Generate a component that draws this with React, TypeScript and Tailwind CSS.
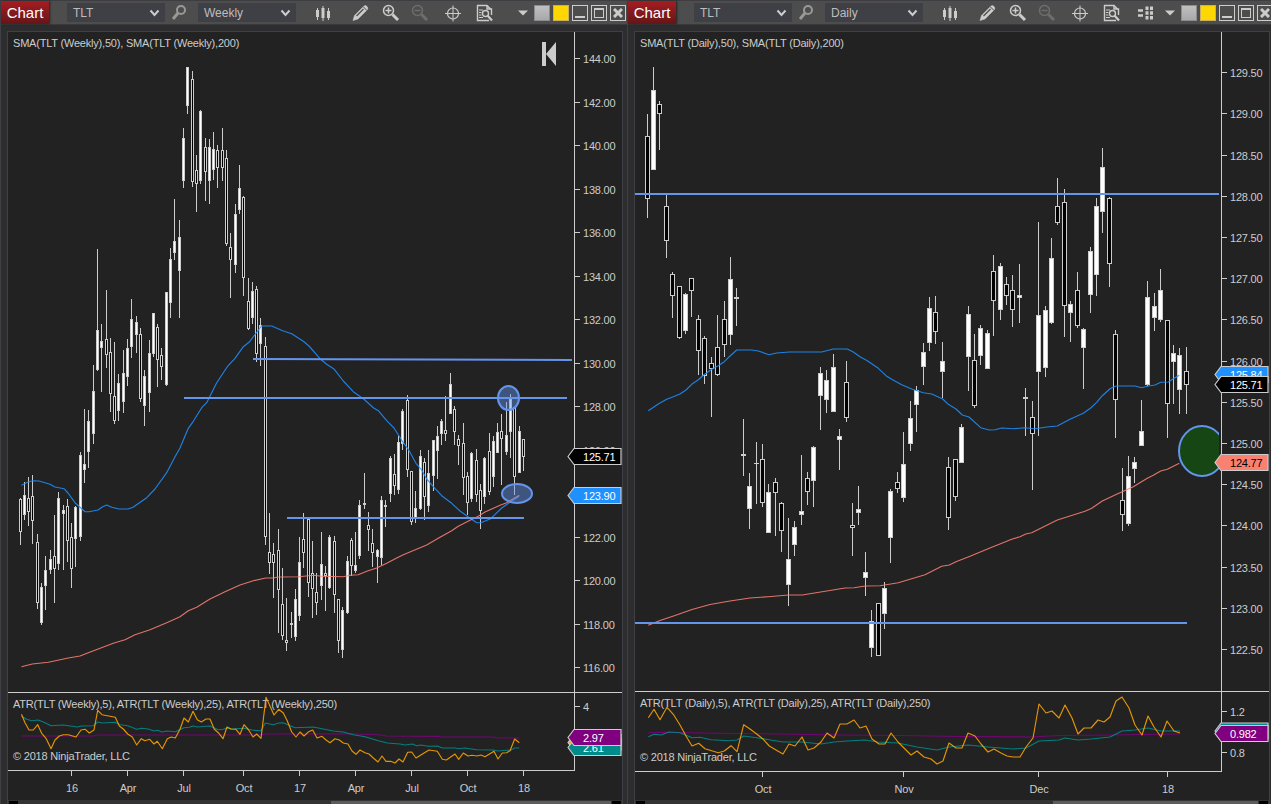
import type { ReactNode } from 'react';
import clsx from 'clsx';

// [x, high, low, bodyTop, bodyBottom, up]
type Candle = [number, number, number, number, number, 0 | 1];

const weekly: Candle[] = [
  [20, 498, 545, 499, 532, 0], [24, 482, 520, 495, 515, 1], [28, 477, 526, 498, 512, 0], [32, 475, 544, 496, 521, 0],
  [37, 534, 609, 542, 603, 0], [41, 583, 625, 587, 623, 1], [45, 556, 610, 570, 586, 1], [50, 550, 574, 559, 570, 1],
  [54, 515, 603, 556, 569, 0], [58, 492, 570, 498, 564, 1], [63, 505, 570, 510, 514, 1], [67, 499, 562, 506, 541, 0],
  [71, 523, 588, 537, 569, 0], [75, 506, 567, 507, 539, 1], [80, 452, 541, 455, 537, 1], [84, 409, 483, 464, 470, 1],
  [88, 410, 468, 421, 452, 1], [93, 365, 444, 391, 434, 1], [97, 249, 371, 330, 370, 1], [101, 324, 392, 341, 348, 1],
  [106, 290, 368, 339, 355, 0], [110, 338, 412, 352, 394, 0], [114, 342, 424, 396, 421, 0], [118, 374, 421, 383, 411, 1],
  [123, 350, 413, 373, 402, 1], [127, 339, 386, 348, 377, 1], [131, 299, 358, 319, 347, 1], [136, 316, 353, 322, 335, 1],
  [140, 328, 402, 334, 399, 0], [144, 370, 426, 376, 406, 1], [149, 340, 412, 353, 393, 1], [153, 313, 357, 313, 354, 1],
  [157, 324, 387, 327, 360, 0], [161, 348, 380, 355, 367, 0], [166, 292, 386, 292, 385, 1], [170, 248, 318, 259, 303, 1],
  [174, 199, 260, 241, 253, 1], [179, 220, 318, 237, 271, 1], [183, 128, 188, 138, 181, 1], [187, 67, 114, 67, 106, 1],
  [192, 71, 187, 79, 182, 0], [196, 155, 212, 170, 184, 0], [200, 110, 184, 111, 181, 1], [205, 138, 201, 147, 172, 0],
  [209, 139, 204, 147, 181, 1], [213, 132, 180, 149, 170, 1], [217, 145, 188, 150, 168, 0], [222, 128, 181, 150, 168, 0],
  [226, 150, 246, 158, 244, 0], [230, 233, 298, 247, 260, 0], [235, 204, 273, 214, 265, 1], [239, 165, 214, 188, 210, 1],
  [243, 196, 296, 197, 278, 0], [248, 278, 330, 301, 329, 0], [252, 282, 324, 291, 318, 1], [256, 286, 362, 289, 354, 0],
  [260, 318, 366, 325, 344, 1], [265, 337, 545, 346, 537, 0], [269, 513, 574, 552, 563, 0], [273, 543, 598, 554, 563, 0],
  [278, 529, 633, 550, 590, 0], [282, 568, 640, 604, 636, 0], [286, 598, 651, 640, 643, 0], [291, 612, 638, 623, 625, 1],
  [295, 589, 641, 599, 637, 1], [299, 537, 621, 562, 616, 1], [303, 513, 568, 539, 553, 0], [308, 518, 597, 519, 583, 0],
  [312, 541, 618, 573, 589, 0], [316, 573, 615, 592, 603, 0], [321, 532, 600, 564, 586, 1], [325, 566, 611, 573, 576, 0],
  [329, 535, 589, 537, 588, 1], [334, 536, 613, 541, 595, 0], [338, 599, 653, 599, 641, 0], [342, 607, 658, 610, 650, 1],
  [347, 556, 614, 561, 613, 1], [351, 538, 576, 540, 566, 0], [355, 532, 573, 565, 571, 1], [359, 500, 559, 505, 556, 1],
  [364, 473, 509, 503, 505, 1], [368, 512, 551, 525, 530, 0], [372, 529, 567, 543, 553, 0], [377, 549, 583, 550, 557, 1],
  [381, 496, 565, 500, 558, 1], [385, 500, 527, 505, 507, 1], [390, 456, 502, 458, 494, 1], [394, 454, 495, 474, 486, 0],
  [398, 436, 494, 442, 490, 1], [402, 409, 450, 411, 444, 1], [407, 395, 477, 400, 470, 0], [411, 471, 525, 471, 522, 0],
  [415, 491, 523, 508, 518, 1], [420, 450, 510, 456, 509, 1], [424, 458, 520, 462, 497, 0], [428, 450, 512, 473, 506, 1],
  [433, 440, 491, 440, 476, 1], [437, 426, 479, 436, 451, 1], [441, 419, 445, 421, 434, 1], [445, 396, 441, 430, 434, 0],
  [450, 373, 414, 384, 414, 1], [454, 406, 445, 409, 432, 0], [458, 435, 465, 439, 446, 0], [463, 423, 495, 443, 478, 0],
  [467, 472, 515, 476, 503, 0], [471, 452, 502, 453, 499, 1], [476, 449, 502, 460, 495, 0], [480, 484, 529, 490, 511, 0],
  [484, 457, 504, 458, 497, 1], [489, 433, 495, 451, 492, 0], [493, 436, 487, 441, 477, 1], [497, 423, 453, 432, 453, 1],
  [501, 414, 485, 431, 439, 0], [506, 402, 455, 435, 452, 1], [510, 394, 458, 399, 432, 1], [514, 407, 495, 407, 477, 0],
  [519, 426, 473, 431, 473, 1], [523, 439, 471, 439, 457, 0],
];

const daily: Candle[] = [
  [647, 114, 218, 136, 199, 0], [653, 67, 170, 90, 170, 1], [659, 101, 150, 104, 114, 0], [666, 195, 258, 206, 241, 0],
  [672, 272, 318, 274, 296, 0], [679, 286, 339, 286, 338, 0], [685, 293, 334, 294, 331, 1], [691, 278, 317, 278, 291, 0],
  [698, 315, 375, 319, 351, 0], [704, 336, 384, 338, 376, 0], [711, 357, 417, 363, 369, 0], [717, 315, 376, 347, 375, 0],
  [724, 301, 357, 319, 345, 0], [730, 257, 345, 279, 335, 1], [736, 288, 326, 297, 299, 0], [743, 419, 476, 454, 456, 1],
  [749, 473, 529, 486, 509, 1], [756, 442, 504, 463, 464, 0], [762, 444, 507, 459, 503, 0], [768, 484, 533, 492, 533, 1],
  [775, 478, 536, 482, 493, 0], [781, 502, 552, 503, 531, 0], [788, 518, 606, 559, 585, 1], [794, 521, 556, 527, 545, 1],
  [801, 455, 525, 511, 515, 1], [807, 472, 505, 478, 492, 0], [813, 446, 507, 447, 481, 1], [820, 367, 430, 373, 396, 1],
  [826, 370, 413, 380, 400, 1], [833, 354, 412, 367, 412, 1], [839, 429, 470, 436, 440, 1], [846, 361, 422, 382, 418, 0],
  [852, 503, 556, 525, 528, 0], [858, 486, 525, 509, 513, 1], [865, 552, 596, 572, 578, 1], [871, 610, 657, 621, 648, 1],
  [878, 603, 656, 603, 656, 0], [884, 582, 629, 588, 614, 1], [890, 489, 563, 491, 538, 1], [897, 472, 493, 482, 489, 0],
  [903, 432, 502, 464, 498, 1], [910, 401, 451, 418, 444, 1], [916, 386, 432, 390, 405, 1], [923, 343, 385, 352, 367, 1],
  [929, 297, 351, 308, 343, 1], [935, 296, 344, 312, 332, 0], [942, 342, 398, 361, 372, 1], [948, 457, 530, 467, 518, 0],
  [955, 459, 501, 459, 497, 0], [961, 424, 463, 427, 463, 1], [968, 306, 391, 314, 357, 1], [974, 334, 408, 360, 406, 0],
  [980, 325, 365, 328, 356, 1], [987, 330, 369, 333, 369, 1], [993, 255, 336, 271, 301, 0], [1000, 263, 320, 266, 310, 1],
  [1006, 277, 305, 284, 296, 0], [1012, 275, 327, 290, 310, 0], [1019, 264, 323, 295, 298, 1], [1025, 388, 436, 397, 399, 0],
  [1032, 401, 490, 417, 434, 0], [1038, 222, 436, 315, 372, 1], [1045, 306, 377, 310, 368, 1], [1051, 238, 324, 258, 323, 1],
  [1057, 178, 225, 206, 223, 0], [1064, 189, 337, 202, 306, 0], [1070, 301, 342, 304, 313, 1], [1077, 272, 328, 290, 326, 0],
  [1083, 328, 389, 329, 348, 1], [1090, 247, 313, 251, 295, 1], [1096, 198, 296, 206, 275, 1], [1102, 148, 233, 167, 212, 1],
  [1109, 197, 287, 198, 264, 0], [1115, 330, 438, 334, 400, 0], [1122, 468, 531, 500, 515, 0], [1128, 456, 526, 476, 524, 1],
  [1134, 457, 483, 462, 469, 1], [1141, 400, 446, 431, 446, 1], [1147, 281, 386, 297, 385, 1], [1154, 293, 331, 306, 318, 1],
  [1160, 269, 322, 290, 320, 1], [1167, 320, 438, 320, 404, 0], [1173, 345, 404, 353, 362, 1], [1179, 348, 414, 355, 390, 1],
  [1186, 347, 414, 371, 385, 0],
];

const weeklySma50 =
  '21.5,485.3 28.3,482 33,480.7 39,481 50,484.3 55,487 64,488.7 68,493 75,502.7 85,511.7 89,511.7 98,510 102.7,506.7 106.7,505 111.7,507.3 119,509 128,509 133,507.3 146.7,497.7 155,489 166.7,472.7 175,456.7 180,448 188.3,428.3 193.3,421.3 201.7,407.7 206.7,402.7 216.7,382.7 227.3,366.7 235,358.3 243.3,346.7 249.3,342 256.7,332.3 261.5,326 271.7,326 283.3,331 291.7,333.7 303.3,341.3 309,346 320,358.7 326.7,364.3 334.3,369.3 343.3,381 353.3,391.7 364,399.3 373.3,407.7 378.3,410.7 386.7,420.7 394,428 403.3,442.7 408.3,449.3 416,463.3 421.7,470 426.7,479 434,487.3 441.7,495.7 451.7,503.3 460,511 467.3,516.3 476.7,522.7 480.7,522.7 490.7,518.7 501.7,508 510.7,501.7 519.3,496.3';
const weeklySma200 =
  '21.5,666.7 32.3,664 48.3,662.3 68.3,658 80,656 88.3,652.7 113.3,643.3 125,639.7 135,634.7 150,629.7 166.7,622.7 180,616.7 188.3,610.7 196.7,607.3 210,599 225,591.7 240,585 253.3,580.7 265.7,578 273.3,578 278.3,577 299,576.7 313.3,575.3 321.7,576.3 343.3,576.7 350,575.3 358.3,574.7 366.7,571.3 376.7,568 386.7,563.3 396.7,558 403.3,554.7 426.7,545 440,537.3 451.7,530.7 458.3,526.3 470,520.3 478.3,516.3 485,512 500,505.3 506.7,502.7 519.3,495.3';
const dailySma50 =
  '648.3,410.7 658.3,404 666.7,399.3 673.3,396.7 680,394 686,390 691.7,384.3 698.3,379.7 704,374.7 711.7,369.3 718.3,365.7 724.3,361.7 730,356 736.7,350 751.7,350 758.3,351 769,354.7 776.7,353 789.3,352 821.7,352 833.3,349 847.3,349 853.3,352 860,356.7 867.3,360.7 878.3,368.3 886,375.7 891.7,379.3 901.7,384.7 911.7,389 923.3,392.7 931.7,394 942.7,399 948.3,404.3 956,409 962.3,415 969,417 980.7,427.7 989.3,430 995,429.7 1001.7,428 1013.3,428.7 1025,427.7 1035,428.7 1046.7,427 1057.3,426 1070,419.3 1083.3,413.3 1090.7,408 1096.7,402.3 1102.3,395.7 1110,388.7 1116,386 1135,386 1141.7,387.7 1148.3,386 1155,385 1160.7,382.3 1168.3,382 1173.3,378.7 1179.3,375.3';
const dailySma200 =
  '648.3,625.3 660,620.5 675,615.5 692,609.5 710,604.5 730,601 750,598 768.3,596.7 788.3,595 802.3,595 845,588 854,587.7 865.3,586 880,585.7 898.3,582.7 925,574.7 941.7,566.3 949.3,565 956,561.7 970,556.3 989.3,548.3 1011.7,539.3 1020,536.7 1025.7,534 1031.7,532.7 1057.3,520 1085,511.3 1091.7,508.3 1102.3,501 1115,495 1133.3,486.7 1147.3,478.3 1153.3,475.3 1160.7,471 1167.3,469.3 1179.3,463.3';

const weeklyAtr5 =
  '21.5,714.3 25,722.7 29,730 33.3,730 37.7,724.7 41.7,733.3 46,738.3 51,748.7 55,740 59.3,736 63.3,734.7 68.3,734.7 76,737 81,730 85.3,729.3 89.3,733 94,730 97.7,710.3 102,714.7 110,716.3 115.3,717.3 119.3,726 123.3,729 127.7,734 132.3,737 136.7,745 141.3,738.7 144.7,740.7 149.7,739.3 154,744 157.3,741.3 162.3,748.7 167.3,738.7 171.3,737 175.3,738 180,729.3 184,718 188.3,722 193,711.3 197.3,719.7 201.3,722 206,719 210,719 214.3,729.3 218.3,732.7 223,738.7 227,727 231,729 236,729.3 240,734.3 244,724.7 248.7,730 253,737 256.7,734 261,738.3 266,697.3 274,715 278.7,709.3 283.3,713 287.3,721 291.7,732 296,737 300,732 304,736 308.7,731.7 312.7,730 317,738 322,736.3 326,740 330,742.7 335,738.7 339.3,740 343.3,743 348,744 352,751 356,754.3 360,750 365,752.7 369,754 373.3,758 378,762 382,756 386,761.3 390.7,761.3 395,763 399,759 403,762 407.7,752.3 411.7,752 416,758 429,750 437.3,751.3 442.3,759.3 446.3,760 455,754 458.7,759.3 463.3,753 468,756 472,755.3 476.7,756 481,755 485,756.7 494,751.3 498,759 502.3,753 506.7,752.7 510,750.7 514.7,739 519.3,742.7';
const weeklyAtr25 =
  '21.5,716.3 26.7,719.3 31.7,720.7 38.3,720 43.3,722 51,725.7 63.3,725 77.3,727 81.7,726 93.3,725.7 97.7,722 102.3,723 115,722.3 120,724.7 127.7,725.7 136.7,729.3 141.3,728.3 148.3,729 154,731 157.3,730.3 162.3,732 166.7,731 175.3,731.7 184,727.7 189.3,727.3 193,726 197.3,727 210,726 218.3,729.7 223.3,729.3 227,728 231,729 244,728.3 253.3,730.3 261,730.7 265.3,723 273.3,724.7 278.7,723 283.3,722.7 295,727.7 313.3,727 333.3,731 343.3,732 353.3,734.7 365,736.7 378.3,740.7 387.3,743 400,744 405,745 412.3,744 416.7,745.7 420.7,745 428.3,746.3 437.3,746 442.3,748 455,748 458.7,748.7 465,748 476.7,749.7 493.3,750 498,751 506.7,750.3 511,750 514.7,748 519.3,748';
const weeklyAtr250 =
  '21.5,736 93.3,736 97.7,735 260,735 266,734 350,733.7 381.7,735 386,736 438.3,736.3 441.7,737 493.3,737 498.3,738 519.3,738';
const dailyAtr5 =
  '648.3,717.7 654,709.3 660,719.7 667,707.3 673.3,714.3 680,725 686,736 692,746 698.7,743.3 705,748.7 718.3,752.7 724.3,751 731,745.7 737,751.7 743.7,724.7 750,729 756.7,734 763.3,739.3 769.3,746 776,750 783,754 789,744 795,746 802,737 808,750 814,748 821,742 827,733 834,738 840,724 847,724 854,720 860,728 866,726 872,739 879,744 885,744 891,733 898,742 905,749 911,755 917,751 924,757 931,759 937,764 943,761 949,743 956,748 962,748 968,733 975,736 981,744 988,752 994,749 1001,753 1007,756 1013,757 1020,757 1026,747 1033,738 1039,704 1046,713 1052,711 1059,718 1065,705 1072,718 1078,734 1084,728 1091,728 1098,720 1104,722 1110,717 1116,701 1122,697 1129,708 1135,725 1142,735 1148,716 1154,727 1161,737 1167,721 1174,731 1180,733';
const dailyAtr25 =
  '648.3,736.7 654,734.3 661,735 669,732 680,732.7 692,737.7 700,737.3 711,739.7 729,740.7 737,740 743.7,736 756.7,737.7 769,739.7 783,742 802,742 821,744 834,742 847,741 865,740 878,742 898,743 917,747 937,750 949,747 968,745 988,747 1013,749 1026,748 1039,741 1059,740 1065,738 1078,740 1091,739 1110,737 1122,731 1135,730 1148,728 1161,731 1180,731';
const dailyAtr250 = '648.3,732.7 668,732.3 700,733 760,733.7 840,735 900,735.5 960,736.5 1030,737 1060,735.5 1110,735 1180,734';

function Candles({ data, half }: { data: Candle[]; half: number }) {
  return (
    <g shapeRendering="crispEdges">
      {data.map(([x, high, low, top, bottom, up]) => {
        const w = half * 2 + 1;
        return (
          <g key={x}>
            <rect x={x} y={high} width={1} height={low - high} fill="#cccccc" />
            <rect x={x - half} y={top} width={w} height={bottom - top} fill="#cccccc" />
            {bottom - top > 2 && (
              <rect x={x - half + 1} y={top + 1} width={w - 2} height={bottom - top - 2} fill={up ? '#ffffff' : '#000000'} />
            )}
          </g>
        );
      })}
    </g>
  );
}

function Series({ points, color }: { points: string; color: string }) {
  return <polyline points={points} fill="none" stroke={color} strokeWidth={1.15} strokeOpacity={0.88} strokeLinejoin="round" />;
}

function Flag({ x, y, right, fill, label, dark }: { x: number; y: number; right: number; fill: string; label?: string; dark?: boolean }) {
  return (
    <g>
      <path d={`M${x} ${y}L${x + 6} ${y - 8}H${right}V${y + 8}H${x + 6}Z`} fill={fill} stroke="#cccccc" strokeWidth={1.2} />
      {label && <text x={x + 15} y={y + 4} fill={dark ? '#000000' : '#ffffff'}>{label}</text>}
    </g>
  );
}

interface AxisProps {
  left: number;
  axis: number;
  right: number;
  split: number;
  bottom: number;
  prices: string[];
  firstY: number;
  stepY: number;
  dates: [number, string][];
}

function Axes({ left, axis, right, split, bottom, prices, firstY, stepY, dates }: AxisProps) {
  return (
    <g fill="#cccccc">
      <g shapeRendering="crispEdges">
        <rect x={axis} y={32} width={1} height={bottom - 31} />
        <rect x={left} y={split} width={right - left} height={1} />
        <rect x={left} y={bottom} width={axis - left} height={1} />
      </g>
      {prices.map((p, i) => {
        const y = Math.round(firstY + i * stepY);
        return (
          <g key={p}>
            <rect x={axis} y={y} width={6} height={1} shapeRendering="crispEdges" />
            <text x={axis + 9} y={y + 5}>{p}</text>
          </g>
        );
      })}
      {dates.map(([x, d]) => (
        <g key={x}>
          <rect x={x} y={bottom} width={1} height={6} shapeRendering="crispEdges" />
          <text x={x + 1} y={bottom + 22} textAnchor="middle">{d}</text>
        </g>
      ))}
    </g>
  );
}

function WeeklyChart() {
  const prices = Array.from({ length: 15 }, (_, i) => (144 - i * 2).toFixed(2));
  return (
    <svg width={614} height={768} viewBox="8 32 614 768" className="block shrink-0 bg-[#222222]" fontFamily="'Liberation Sans', Arial, sans-serif" fontSize={11} letterSpacing={-0.2}>
      <Axes
        left={8} axis={574} right={622} split={692} bottom={770} prices={prices} firstY={58} stepY={43.5}
        dates={[[71, '16'], [127, 'Apr'], [183, 'Jul'], [243, 'Oct'], [299, '17'], [355, 'Apr'], [411, 'Jul'], [467, 'Oct'], [523, '18']]}
      />
      <g fill="#cccccc">
        <rect x={574} y={706} width={6} height={1} />
        <text x={583} y={711}>4</text>
        <text x={13} y={47}>SMA(TLT (Weekly),50), SMA(TLT (Weekly),200)</text>
        <text x={13} y={708}>ATR(TLT (Weekly),5), ATR(TLT (Weekly),25), ATR(TLT (Weekly),250)</text>
        <text x={13} y={760}>© 2018 NinjaTrader, LLC</text>
        <path d="M542 42h4v24h-4zM556 42v24l-10-12z" />
      </g>
      <Candles data={weekly} half={1} />
      <Series points={weeklySma50} color="#1e90ff" />
      <Series points={weeklySma200} color="#fa8072" />
      <Series points={weeklyAtr250} color="#800080" />
      <Series points={weeklyAtr25} color="#008b8b" />
      <Series points={weeklyAtr5} color="#ffa500" />
      <g stroke="#6495ed" strokeWidth={2}>
        <path d="M253 359L572 360M184 398H567M287 518H524" />
        <ellipse cx={508.5} cy={398} rx={10.5} ry={12} fill="#6495ed" fillOpacity={0.45} />
        <ellipse cx={517} cy={493.5} rx={15} ry={9.5} fill="#6495ed" fillOpacity={0.45} />
      </g>
      <Flag x={568} y={456.5} right={621} fill="#000000" label="125.71" />
      <Flag x={568} y={495.5} right={621} fill="#1e90ff" label="123.90" />
      <Flag x={568} y={742.5} right={621} fill="#ffa500" />
      <Flag x={568} y={747.5} right={621} fill="#008b8b" label="2.61" />
      <Flag x={568} y={737.5} right={621} fill="#800080" label="2.97" />
    </svg>
  );
}

function DailyChart() {
  const prices = Array.from({ length: 15 }, (_, i) => (129.5 - i * 0.5).toFixed(2));
  return (
    <svg width={634} height={768} viewBox="635 32 634 768" className="block shrink-0 bg-[#222222]" fontFamily="'Liberation Sans', Arial, sans-serif" fontSize={11} letterSpacing={-0.2}>
      <clipPath id="plot">
        <rect x={635} y={32} width={584} height={660} />
      </clipPath>
      <Axes
        left={635} axis={1221} right={1269} split={691} bottom={771} prices={prices} firstY={72.2} stepY={41.2}
        dates={[[762, 'Oct'], [903, 'Nov'], [1038, 'Dec'], [1167, '18']]}
      />
      <g fill="#cccccc">
        <rect x={1221} y={711} width={6} height={1} />
        <text x={1230} y={716}>1.2</text>
        <rect x={1221} y={752} width={6} height={1} />
        <text x={1230} y={757}>0.8</text>
        <text x={640} y={47}>SMA(TLT (Daily),50), SMA(TLT (Daily),200)</text>
        <text x={640} y={707}>ATR(TLT (Daily),5), ATR(TLT (Daily),25), ATR(TLT (Daily),250)</text>
        <text x={640} y={761}>© 2018 NinjaTrader, LLC</text>
      </g>
      <Candles data={daily} half={2} />
      <Series points={dailySma50} color="#1e90ff" />
      <Series points={dailySma200} color="#fa8072" />
      <Series points={dailyAtr250} color="#800080" />
      <Series points={dailyAtr25} color="#008b8b" />
      <Series points={dailyAtr5} color="#ffa500" />
      <g stroke="#6495ed" strokeWidth={2} clipPath="url(#plot)">
        <path d="M635 194H1219M635 623H1187" />
        <ellipse cx={1202} cy={451} rx={23} ry={25} fill="#174615" />
      </g>
      <Flag x={1215} y={374.5} right={1268} fill="#1e90ff" label="125.84" />
      <Flag x={1215} y={384.5} right={1268} fill="#000000" label="125.71" />
      <Flag x={1215} y={462.5} right={1268} fill="#fa8072" label="124.77" dark />
      <Flag x={1215} y={731} right={1268} fill="#008b8b" />
      <Flag x={1215} y={733.5} right={1268} fill="#800080" label="0.982" />
    </svg>
  );
}

function Dropdown({ value }: { value: string }) {
  return (
    <div className="flex h-[19px] w-[98px] shrink-0 items-center justify-between bg-[#3f3f46] pr-[5px] pl-[6px] text-[12px] text-[#bdbdbd]">
      <span>{value}</span>
      <svg width="11" height="8" viewBox="0 0 11 8" fill="none">
        <path d="M1.500 1.500l4 4.500l4-4.500" stroke="#cccccc" strokeWidth="2" />
      </svg>
    </div>
  );
}

function Icon({ w, className, children }: { w: number; className?: string; children: ReactNode }) {
  return (
    <svg width={w} height={18} viewBox={`0 0 ${w} 18`} className={clsx('block shrink-0', className)} fill="none" stroke="#cccccc">
      {children}
    </svg>
  );
}

function Toolbar({ interval, linked }: { interval: string; linked?: boolean }) {
  return (
    <header className="flex h-[25px] shrink-0 items-center border-t border-b border-t-[#3e3e42] border-b-[#3a3a3d] bg-[#4d4d4d]">
      <div className="flex h-[23px] w-12 shrink-0 items-center justify-center bg-linear-to-b from-[#a51d22] to-[#661518] pt-px text-[15px] text-white shadow-[1px_0_2px_#222]">
        Chart
      </div>
      <div className="ml-[18px] flex items-center">
        <Dropdown value="TLT" />
        <Icon w={16} className="mr-[11px] ml-1.5">
          <circle cx="10" cy="6" r="4" stroke="#999999" strokeWidth="2" />
          <path d="M7 9L2 15" stroke="#999999" strokeWidth="3" />
        </Icon>
        <Dropdown value={interval} />
      </div>
      <Icon w={16} className="ml-[19px]">
        <path d="M2.5 4v12M8 2v15M13.5 4v12" />
        <path d="M2.5 6v7M8 4v10M13.5 7v7" strokeWidth="3" />
      </Icon>
      <Icon w={17} className="ml-[21px]">
        <path d="M1 16.500l1.500-5L12 2q1.500-1 3 .5t.5 3L6 15z" fill="#cccccc" strokeWidth="0.500" />
        <path d="M4.500 12L11.500 5" stroke="#4d4d4d" strokeWidth="1.200" />
        <path d="M11 2.500l4 4" stroke="#4d4d4d" />
      </Icon>
      <Icon w={18} className="ml-[13px]">
        <circle cx="6.500" cy="6.500" r="5" strokeWidth="1.500" />
        <path d="M3.500 6.500h6M6.500 3.500v6" strokeWidth="1.500" />
        <path d="M10.500 10.500L16 16" strokeWidth="3" />
      </Icon>
      <Icon w={18} className="ml-[11px] opacity-25">
        <circle cx="6.500" cy="6.500" r="5" strokeWidth="1.500" />
        <path d="M3.500 6.500h6" strokeWidth="1.500" />
        <path d="M10.500 10.500L16 16" strokeWidth="3" />
      </Icon>
      <Icon w={18} className="ml-[15px]">
        <circle cx="9" cy="9.500" r="5.500" strokeWidth="1.200" />
        <path d="M1 9.500h16M9 1.500v16" />
      </Icon>
      <Icon w={17} className="ml-[14px]">
        <path d="M1 1.500h10l4 4M1.500 1v15.500H13M11 1.500V5h4.500v6" strokeWidth="1.400" />
        <path d="M3 6h4M3 8.500h2.500M3 11h2.500M3 13.500h4" />
        <circle cx="9.500" cy="9.500" r="3" strokeWidth="1.400" />
        <path d="M11.500 11.500L16 16.500" strokeWidth="2.200" />
      </Icon>
      {linked && (
        <Icon w={17} className="ml-[17px]">
          <path d="M1 6.500h5M1 11.500h5" strokeWidth="2.500" />
          <path d="M10 2.500v13.500M14.500 2.500v13.500" strokeWidth="3" strokeDasharray="3.500 1.200" />
        </Icon>
      )}
      <div className="ml-auto flex shrink-0 items-center">
        <svg width="10" height="6" viewBox="0 0 10 6" className="mr-1.5">
          <path d="M0 .5h10L5 5.500z" fill="#cccccc" />
        </svg>
        <div className="flex gap-[3px] pt-px pr-px">
          <div className="h-4 w-4 border border-[#8c8c8c] bg-linear-to-b from-[#c0c0c0] to-[#a9a7aa]" />
          <div className="h-4 w-4 border border-[#c9b060] bg-[#ffd700]" />
          <div className="flex h-4 w-4 items-end justify-center border border-[#cccccc] pb-0.5">
            <div className="h-0.5 w-2.5 bg-[#cccccc]" />
          </div>
          <div className="flex h-4 w-4 items-center justify-center border border-[#cccccc]">
            <div className="h-2.5 w-2.5 border border-t-2 border-[#cccccc]" />
          </div>
          <div className="flex h-4 w-4 items-center justify-center border border-[#cccccc]">
            <svg width="10" height="10" viewBox="0 0 10 10">
              <path d="M1 1l8 8M9 1L1 9" stroke="#cccccc" strokeWidth="3" />
            </svg>
          </div>
        </div>
      </div>
    </header>
  );
}

export default function App() {
  return (
    <div className="flex h-[804px] w-[1271px] overflow-hidden bg-[#2d2d30] font-['Liberation_Sans',Arial,sans-serif]">
      {/* Weekly window */}
      <section className="flex h-full w-[627px] shrink-0 flex-col border-l border-[#3f3f46]">
        <Toolbar interval="Weekly" />
        <div className="mt-1.5 ml-1.5 w-[616px] border-x border-t border-[#3f3f46]">
          <WeeklyChart />
          <div className="flex h-1 bg-[#333333] pt-px">
            <div className="ml-px h-1 w-[9px] bg-black" />
            <div className="ml-[313px] h-1 w-[280px] bg-[#5c5c5c]" />
            <div className="ml-px h-1 w-[9px] bg-black" />
          </div>
        </div>
      </section>

      {/* Daily window */}
      <section className="flex h-full w-[647px] shrink-0 flex-col border-l border-[#3f3f46]">
        <Toolbar interval="Daily" linked />
        <div className="mt-1.5 ml-1.5 w-[636px] border-x border-t border-[#3f3f46]">
          <DailyChart />
          <div className="flex h-1 bg-[#333333] pt-px">
            <div className="ml-px h-1 w-[9px] bg-black" />
            <div className="ml-[408px] h-1 w-[205px] bg-[#5c5c5c]" />
            <div className="ml-px h-1 w-[9px] bg-black" />
          </div>
        </div>
      </section>
    </div>
  );
}
